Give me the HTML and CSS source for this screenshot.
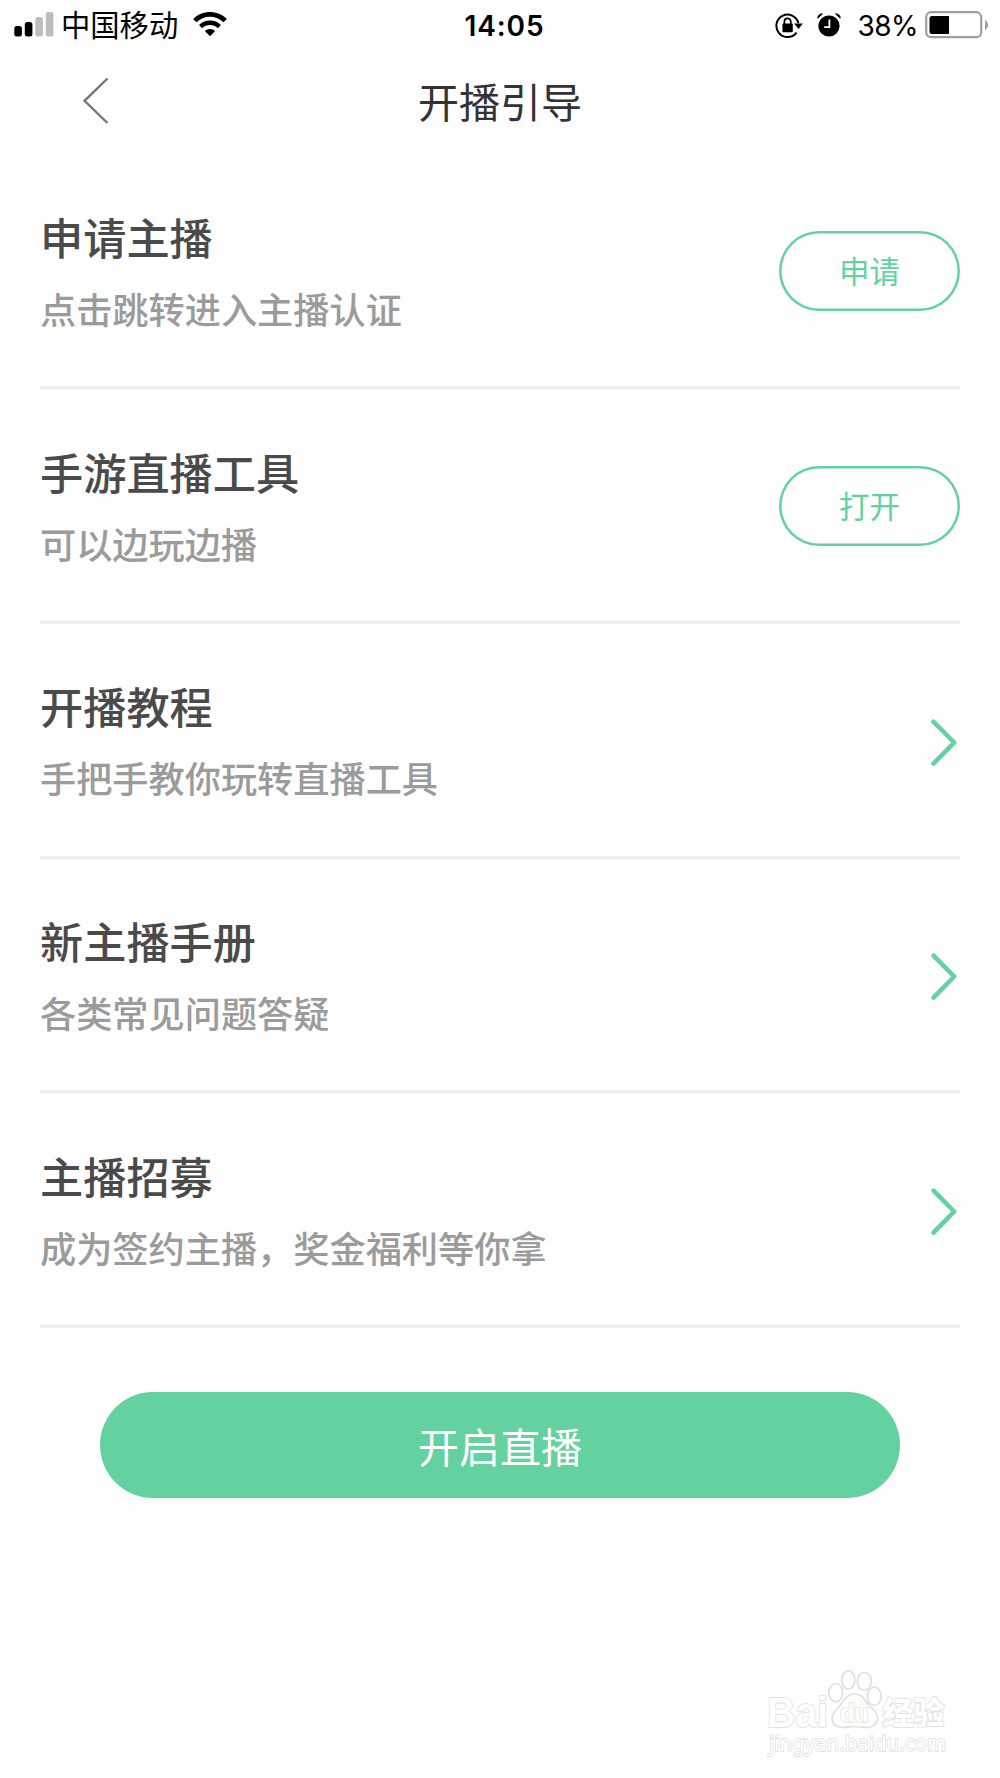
FILE: index.html
```html
<!DOCTYPE html>
<html lang="zh-CN">
  <head>
    <meta charset="UTF-8" />
    <meta name="viewport" content="width=device-width, initial-scale=1.0" />
    <title>开播引导</title>
    <link rel="stylesheet" href="styles.css">
  </head>
  <body>
    <div class="status-bar">
      <div class="status-left">
        <svg class="signal" width="40" height="26" viewBox="0 0 40 26">
          <rect x="0.3" y="14" width="7.6" height="10.5" rx="2.5" fill="#000" />
          <rect x="10.8" y="10" width="7.6" height="14.5" rx="2.5" fill="#000" />
          <rect x="21.3" y="5" width="7.6" height="19.5" rx="2.5" fill="#bdbdbd" />
          <rect x="31.8" y="0" width="7.6" height="24.5" rx="2.5" fill="#bdbdbd" />
        </svg>
        <span class="carrier">中国移动</span>
        <svg class="wifi" width="34" height="25" viewBox="0 0 34 25">
          <path d="M1.8 8.6a21.6 21.6 0 0 1 30.4 0" fill="none" stroke="#000" stroke-width="4.8" />
          <path d="M7.6 14.6a13.4 13.4 0 0 1 18.8 0" fill="none" stroke="#000" stroke-width="4.4" />
          <path d="M17 24.3l-5.2-5.2a7.4 7.4 0 0 1 10.4 0z" fill="#000" />
        </svg>
      </div>
      <div class="time">14:05</div>
      <div class="status-right">
        <svg class="lock" width="28" height="25" viewBox="0 0 28 25">
          <path d="M21.5 19.6A11.2 11.2 0 1 1 23.4 10" fill="none" stroke="#000" stroke-width="2" />
          <path d="M19 10.5h8.8l-4.2 5.5z" fill="#000" />
          <rect x="7.4" y="10.6" width="10.4" height="8.6" rx="1" fill="#000" />
          <path d="M9.4 11V8.6a3.2 3.2 0 0 1 6.4 0V11" fill="none" stroke="#000" stroke-width="1.7" />
        </svg>
        <svg class="alarm" width="24" height="24" viewBox="0 0 24 24">
          <circle cx="12" cy="13" r="10.6" fill="#000" />
          <path d="M0.8 5.2A4.2 4.2 0 0 1 5.4 0.9zM23.2 5.2A4.2 4.2 0 0 0 18.6 0.9z" fill="#000" stroke="#000" stroke-width="1" />
          <path d="M12.4 6.6v7.6H7.2" fill="none" stroke="#fff" stroke-width="1.8" />
        </svg>
        <span class="percent">38%</span>
        <svg class="battery" width="64" height="28" viewBox="0 0 64 28">
          <rect x="1.2" y="1.2" width="55" height="25" rx="5" fill="#fff" stroke="#9e9e9e" stroke-width="2.2" />
          <path d="M7 5h17v18H7a2.5 2.5 0 0 1-2.5-2.5v-13A2.5 2.5 0 0 1 7 5z" fill="#000" />
          <path d="M60 9c4 2 4 8 0 10z" fill="#9e9e9e" />
        </svg>
      </div>
    </div>

    <div class="nav">
      <svg class="back" width="28" height="48" viewBox="0 0 28 48">
        <path d="M25.5 1.5L2.5 23.8l23 22.2" fill="none" stroke="#777" stroke-width="2.4" />
      </svg>
      <h1 class="nav-title">开播引导</h1>
    </div>

    <div class="list">
      <div class="item">
        <div class="info">
          <h2>申请主播</h2>
          <p>点击跳转进入主播认证</p>
        </div>
        <button class="outline-btn">申请</button>
      </div>
      <div class="item">
        <div class="info">
          <h2>手游直播工具</h2>
          <p>可以边玩边播</p>
        </div>
        <button class="outline-btn">打开</button>
      </div>
      <div class="item">
        <div class="info">
          <h2>开播教程</h2>
          <p>手把手教你玩转直播工具</p>
        </div>
        <svg class="arrow" width="30" height="50" viewBox="0 0 30 50">
          <path d="M3.5 3.6L24.2 24.5 3.5 45.7" />
        </svg>
      </div>
      <div class="item">
        <div class="info">
          <h2>新主播手册</h2>
          <p>各类常见问题答疑</p>
        </div>
        <svg class="arrow" width="30" height="50" viewBox="0 0 30 50">
          <path d="M3.5 3.6L24.2 24.5 3.5 45.7" />
        </svg>
      </div>
      <div class="item">
        <div class="info">
          <h2>主播招募</h2>
          <p>成为签约主播，奖金福利等你拿</p>
        </div>
        <svg class="arrow" width="30" height="50" viewBox="0 0 30 50">
          <path d="M3.5 3.6L24.2 24.5 3.5 45.7" />
        </svg>
      </div>
    </div>

    <button class="start-btn">开启直播</button>

    <svg class="watermark" width="240" height="120" viewBox="0 0 240 120">
      <ellipse cx="95.7" cy="42.7" rx="7" ry="9" />
      <ellipse cx="108.3" cy="30" rx="6.5" ry="9.3" />
      <ellipse cx="124.3" cy="31.3" rx="7" ry="9" />
      <ellipse cx="134.3" cy="46.3" rx="7" ry="9" />
      <path d="M114.5 44c8 0 10 6 14 11 5 5 9 7 9 13 0 7-6 10-12 9.5-4-.5-7-1-11-1s-6 .5-10 1c-7 .5-12.500-3-12.500-9.500 0-5 4-8 8.500-13 4-5 6-11 14-11z" />
      <text class="wm-logo" x="27" y="76.5" textLength="61" lengthAdjust="spacingAndGlyphs">Bai</text>
      <text class="wm-du" x="100" y="71.5" textLength="28.5" lengthAdjust="spacingAndGlyphs">du</text>
      <text class="wm-cn" x="142.5" y="74">经验</text>
      <text class="wm-url" x="29" y="100.5" textLength="177" lengthAdjust="spacingAndGlyphs">jingyan.baidu.com</text>
    </svg>
  </body>
</html>
```

FILE: styles.css
```css
* {
  box-sizing: border-box;
}

body {
  margin: 0;
  position: relative;
  height: 1778px;
  overflow: hidden;
  background-color: #fefefe;
  font-family: "Noto Sans CJK SC", sans-serif;
}

h1,
h2,
p {
  margin: 0;
}

button {
  font-family: inherit;
  padding: 0;
}

.status-bar {
  display: grid;
  grid-template-columns: 1fr auto 1fr;
  align-items: center;
  height: 50px;
  padding: 0 11px 0 14px;
  color: #000;
}

.status-left,
.status-right {
  display: flex;
  align-items: center;
}

.status-left svg {
  margin-top: -1px;
}

.status-right {
  justify-content: flex-end;
}

.carrier {
  margin: 0 15px 0 7px;
  padding-bottom: 3px;
  font-size: 29.3px;
  line-height: 47px;
}

.time {
  padding: 1px 0 0 6px;
  font-family: Inter, sans-serif;
  font-size: 28px;
  font-weight: 600;
  letter-spacing: 0.9px;
}

.alarm {
  margin: 0 16px 0 14px;
}

.percent {
  padding-top: 1px;
  margin-right: 7px;
  font-family: Inter, sans-serif;
  font-size: 28px;
  letter-spacing: -0.5px;
}

.nav {
  display: grid;
  grid-template-columns: 100px 1fr 100px;
  align-items: center;
  height: 104.5px;
}

.back {
  justify-self: end;
  margin: 0 -10px 2px 0;
}

.nav-title {
  padding-bottom: 4px;
  text-align: center;
  font-size: 41px;
  font-weight: 400;
  line-height: 60px;
  color: #333;
}

.list {
  padding: 0 40px;
}

.item {
  display: flex;
  align-items: center;
  justify-content: space-between;
  height: 234.7px;
  border-bottom: 3px solid #eee;
}

.info {
  padding-top: 3px;
}

.info h2 {
  font-size: 43.2px;
  font-weight: 500;
  line-height: 70px;
  color: #4a4a4a;
}

.info p {
  padding-top: 2px;
  font-size: 36.2px;
  font-weight: 500;
  line-height: 70px;
  color: #9b9b9b;
}

.outline-btn {
  width: 181px;
  height: 80px;
  margin-top: 1px;
  padding-bottom: 2px;
  border: none;
  border-radius: 40px;
  box-shadow: inset 0 0 0 2.5px #64d1a0;
  background: none;
  color: #64d1a0;
  font-size: 30.5px;
  font-weight: 400;
}

.arrow {
  margin-top: 6px;
  fill: none;
  stroke: #64d1a0;
  stroke-width: 4.6;
  stroke-linecap: round;
  stroke-linejoin: round;
}

.start-btn {
  display: block;
  width: 800px;
  height: 106px;
  margin: 64.5px auto 0;
  border: none;
  border-radius: 53px;
  background-color: #64d1a0;
  color: #fff;
  font-size: 41px;
  font-weight: 400;
}

.watermark {
  position: absolute;
  right: 20px;
  bottom: 8px;
  fill: #fff;
  stroke: #dedede;
  stroke-width: 1.6;
}

.watermark text {
  paint-order: stroke;
}

.wm-logo {
  font-family: "Liberation Sans", sans-serif;
  font-size: 42px;
  font-weight: 700;
}

.wm-du {
  font-family: "Liberation Sans", sans-serif;
  font-size: 26px;
  font-weight: 700;
}

.wm-cn {
  font-size: 31px;
  font-weight: 900;
}

.wm-url {
  font-family: "Noto Sans", sans-serif;
  font-size: 22px;
}
```
